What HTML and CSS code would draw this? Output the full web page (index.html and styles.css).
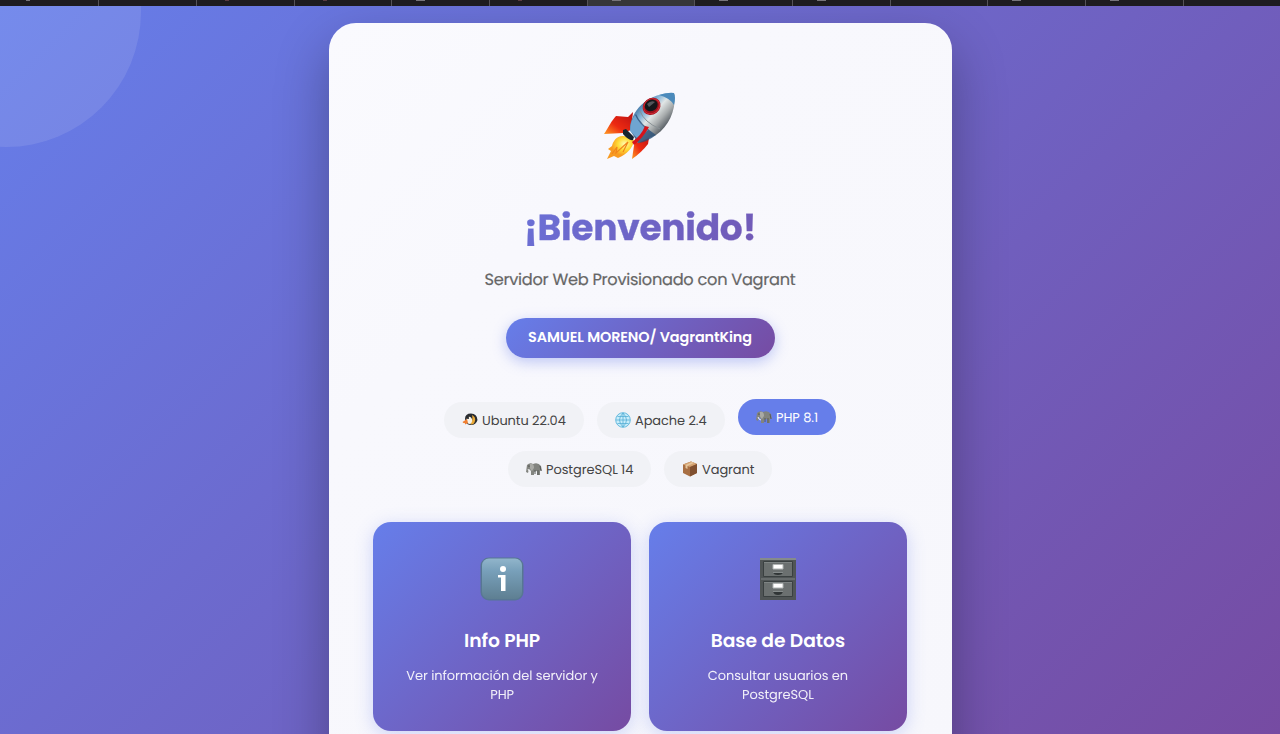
FILE: index.html
```html
<!DOCTYPE html>
<html lang="es">
<head>
<meta charset="utf-8">
<title>¡Bienvenido!</title>
<link rel="stylesheet" href="styles.css">
</head>
<body>
<div class="tabs">
  <i class="tab mark red first"></i><i class="tab"></i><i class="tab mark red"></i><i class="tab mark red"></i><i class="tab mark"></i><i class="tab mark red"></i><i class="tab mark active"></i><i class="tab mark"></i><i class="tab mark"></i><i class="tab"></i><i class="tab mark"></i><i class="tab mark"></i><i class="tab last"></i>
</div>
<main class="page">
  <div class="bubble"></div>
  <section class="panel">
    <svg class="rocket" viewBox="0 0 72 68">
      <defs>
        <linearGradient id="hull" x1="0" y1="0" x2="1" y2="1"><stop offset=".2" stop-color="#326b9f"/><stop offset=".37" stop-color="#8fbada"/><stop offset=".47" stop-color="#e1e6e6"/><stop offset=".6" stop-color="#a9adae"/><stop offset=".75" stop-color="#4d545b"/></linearGradient>
        <linearGradient id="fin" x1="1" y1="0" x2="0" y2="1"><stop offset="0" stop-color="#b90f12"/><stop offset=".6" stop-color="#ed2a12"/><stop offset="1" stop-color="#ff9b22"/></linearGradient>
        <radialGradient id="flame" cx=".65" cy=".35"><stop offset="0" stop-color="#fffbb2"/><stop offset=".5" stop-color="#ffdc37"/><stop offset="1" stop-color="#f89a20"/></radialGradient>
      </defs>
      <path d="M29 20 24 25 12 24C8 28 4 36 0 42L19 41 27 38Z" fill="url(#fin)"/>
      <path d="M46 40 44 52C40 57 34 63 28 67L31 47Z" fill="url(#fin)"/>
      <path d="M20 44C13 43 9 49 8 54L4 57 7 59 3 67 10 64 14 66C23 62 29 56 30 48Z" fill="url(#flame)"/>
      <path d="M8 62 13 55 12 61 24 50 19 60" fill="none" stroke="#f1841b" stroke-width="1.2"/>
      <path d="M26 37C27 19 42 3 65 1Q70 0 71 3C71 20 65 34 52 43L34 51Z" fill="url(#hull)"/>
      <path d="M55 3Q65 0 70 1Q72 5 70 13Q66 6 55 3" fill="#4b8abb"/>
      <path d="M32 22Q36 32 52 43Q43 50 34 51L26 38Q26 28 32 22" fill="#294f78" opacity=".8"/>
      <path d="M31 23Q35 32 44 38L34 47 26 39Q26 29 31 23" fill="#6fa5d0"/>
      <path d="M36 19Q40 30 56 37" fill="none" stroke="#899296" stroke-width="1"/>
      <path d="M19 38 22 37 30 45 29 48Q25 49 19 42Z" fill="#18242f"/>
      <path d="M41 34 45 35Q39 46 30 53L28 50Q37 44 41 34" fill="#d5131a"/>
      <ellipse cx="47.500" cy="14" rx="9.500" ry="8.100" transform="rotate(-38 48 14)" fill="#9d111b"/>
      <ellipse cx="47.500" cy="14" rx="8.400" ry="7" transform="rotate(-38 48 14)" fill="none" stroke="#d42a35"/>
      <ellipse cx="47" cy="13.500" rx="6.700" ry="5.600" transform="rotate(-30 47 13)" fill="#15171b"/>
      <path d="M43 12Q47 8 51 10L45 15Z" fill="#52565b"/>
    </svg>
    <h1 class="title">¡Bienvenido!</h1>
    <p class="subtitle">Servidor Web Provisionado con Vagrant</p>
    <div class="badge"><span>SAMUEL MORENO/ VagrantKing</span></div>
    <div class="techs">
      <div class="tech ubuntu"><svg viewBox="0 0 16 16"><path d="M3 7Q3 1.500 9 1.500Q15 1.500 15.500 8Q14 13 9 13Q5 13 4 10Z" fill="#292c30"/><path d="M5 6Q8 3 10 7T8 12Q5 12 4 9Z" fill="#f6f3e9"/><path d="M10 3Q14 5 13 9T8.500 12.500Q11.500 8 10 3" fill="#eaa936"/><path d="M5 7 .5 10Q1 11.500 3 11L3 12.500 6 11Z" fill="#ef7f31"/><circle cx="6" cy="6" r="1" fill="#111"/></svg><span>Ubuntu 22.04</span></div>
      <div class="tech apache"><svg viewBox="0 0 16 16"><circle cx="8" cy="8" r="7.300" fill="#c9edfa" stroke="#68bbdf" stroke-width="1"/><path d="M8 1V15M1 8H15M2.500 4.500H13.500M2.500 11.500H13.500M8 1Q1 8 8 15Q15 8 8 1" fill="none" stroke="#55afd5" stroke-width=".8"/></svg><span>Apache 2.4</span></div>
      <div class="tech php"><svg viewBox="0 0 16 16"><use href="#elephant"/></svg><span>PHP 8.1</span></div>
      <div class="tech postgres"><svg viewBox="0 0 16 16"><g id="elephant"><path d="M1 4Q4 1 7 3Q12 1 15 5L16 10 14 9V14H11V10L8 11V14H5V10L3 8 2 12 0 11Z" fill="#82847f"/><path d="M4 3Q8 2 8 7L6 10Q3 8 4 3" fill="#a9aaa5"/><path d="M9 9V13M12 9V14M14 5 15 10" stroke="#595c59" fill="none"/><circle cx="3" cy="5" r=".6" fill="#222"/><path d="M2 8 3 10 5 11" stroke="#eee" fill="none"/></g></svg><span>PostgreSQL 14</span></div>
      <div class="tech vagrant"><svg viewBox="0 0 16 16"><path d="M1 3.500 9 .5 15 3V12L8 15.500 1 12Z" fill="#a86f43"/><path d="M1 3.500 9 .5 15 3 8 6Z" fill="#d4a271"/><path d="M8 6 15 3V12L8 15.500Z" fill="#805030"/><path d="M10 1 3.500 4V7L5.500 8V5L12 2Z" fill="#e5c59b"/></svg><span>Vagrant</span></div>
    </div>
    <div class="cards">
      <article class="card">
        <svg class="icon" viewBox="0 0 44 44"><defs><linearGradient id="infoBg" x2="0" y2="1"><stop stop-color="#91b5cb"/><stop offset=".3" stop-color="#78a0ba"/><stop offset="1" stop-color="#5e7f92"/></linearGradient></defs><rect x=".5" y=".5" width="43" height="43" rx="8.500" fill="#577793"/><rect x="2" y="1.500" width="40" height="40.500" rx="7" fill="url(#infoBg)"/><circle cx="23" cy="12" r="3" fill="#fff"/><path d="M18 18H25.500V34H21V20.500H18Z" fill="#fff"/></svg>
        <h2>Info PHP</h2>
        <p>Ver información del servidor y<br>PHP</p>
      </article>
      <article class="card">
        <svg class="icon" viewBox="0 0 44 44"><path d="M4 1H40V43H4Z" fill="#505556"/><path d="M4 1H40V3H4Z" fill="#858b8b"/><path d="M7.500 4.500H36.500V19.500H7.500ZM7.500 24.500H36.500V39.500H7.500Z" fill="#6b7070" stroke="#3a4041"/><path d="M8 5.500H36M8 25.500H36M5 22H39" stroke="#7e8484"/><path d="M17 7.500H27V12H17ZM17 26.500H27V31H17Z" fill="#fff" stroke="#b1b5b5"/><path d="M17 15.500H27Q26 18 22 18T17 15.500M17 34.500H27Q26 38 22 38T17 34.500" fill="#303536"/><path d="M17 15.500H27M17 34.500H27" stroke="#858b8b"/></svg>
        <h2>Base de Datos</h2>
        <p>Consultar usuarios en<br>PostgreSQL</p>
      </article>
    </div>
  </section>
</main>
</body>
</html>
```
FILE: styles.css
```css
* { box-sizing: border-box; margin: 0; padding: 0; }
body { height: 734px; overflow: hidden; font-family: Poppins, Inter, sans-serif; text-rendering: geometricPrecision; }
.tabs { display: flex; height: 6px; background: #1e1c20; }
.tab { flex: 0 0 97.8px; height: 6px; padding-left: 24px; border-right: 1px solid #555259; }
.tab:first-child { flex-basis: 99px; }
.tab.mark::before { content: ""; display: block; width: 9px; height: 1px; background: #77747b; }
.tab.red::before { background: #5a3b42; width: 4px; margin-left: 4px; }
.tab.first::before { background: #77747b; margin-left: 2px; }
.tab.active { flex-basis: 107px; background: #363639; }
.tab.last { border: 0; }
.page { position: relative; display: flex; justify-content: center; height: 728px; padding: 17px 0 0 1px; overflow: hidden; background: linear-gradient(135deg, #667eea 0%, #764ba2 100%); }
.bubble { position: absolute; left: -129px; top: -129px; width: 270px; height: 270px; border-radius: 50%; background: rgba(255,255,255,.1); }
.panel { position: relative; display: flex; flex-direction: column; align-items: center; width: 623px; height: 760px; padding: 69px 45px 0 44px; border-radius: 27px; background: linear-gradient(135deg, #fafafe, #f8f8fd 30%, #f7f7fc); box-shadow: 0 23px 54px rgba(0,0,0,.3); }
.rocket { width: 72px; height: 68px; flex: none; }
.title { margin-top: 42px; height: 52px; line-height: 52px; font-size: 36px; font-weight: 700; letter-spacing: -.27px; -webkit-text-stroke: .3px transparent; white-space: nowrap; width: 533px; text-align: center; background: linear-gradient(135deg, #667eea, #764ba2); background-clip: text; -webkit-background-clip: text; color: transparent; }
.subtitle { margin-top: 12px; height: 28px; line-height: 28px; font-size: 16.2px; color: #666; letter-spacing: -.27px; -webkit-text-stroke: .2px #666; white-space: nowrap; }
.badge { display: flex; align-items: center; justify-content: center; width: 269px; height: 40px; margin-top: 24px; border-radius: 20px; background: linear-gradient(135deg, #667eea, #764ba2); box-shadow: 0 4px 14px rgba(102,126,234,.4); color: #fff; font-size: 14.4px; font-weight: 600; letter-spacing: -.1px; white-space: nowrap; }
.techs { display: flex; flex-wrap: wrap; justify-content: center; gap: 13px; width: 440px; margin-top: 44px; }
.tech { display: flex; align-items: center; gap: 4px; height: 36px; padding: 1px 0 0 18px; border-radius: 18px; background: #f1f2f6; color: #444; font-size: 12.96px; letter-spacing: -.06px; white-space: nowrap; }
.tech svg { width: 16px; height: 16px; flex: none; margin-top: -2px; }
.ubuntu { width: 140px; }
.apache { width: 128px; }
.php { width: 98px; margin-top: -3px; margin-bottom: 3px; background: #667eea; color: #fff; }
.postgres { width: 143px; }
.vagrant { width: 108px; }
.cards { display: grid; grid-template-columns: 257.8px 257.8px; gap: 18px; margin-top: 35px; }
.card { display: flex; flex-direction: column; align-items: center; height: 209px; padding-top: 35px; border-radius: 18px; background: linear-gradient(135deg, #667eea, #764ba2); box-shadow: 0 4px 18px rgba(102,126,234,.3); color: #fff; text-align: center; }
.icon { width: 44px; height: 44px; flex: none; }
.card h2 { margin-top: 26px; height: 28px; line-height: 28px; font-size: 18.72px; font-weight: 600; letter-spacing: -.06px; white-space: nowrap; }
.card p { margin-top: 12px; line-height: 18.5px; font-size: 12.96px; letter-spacing: -.06px; opacity: .9; white-space: nowrap; }
```
